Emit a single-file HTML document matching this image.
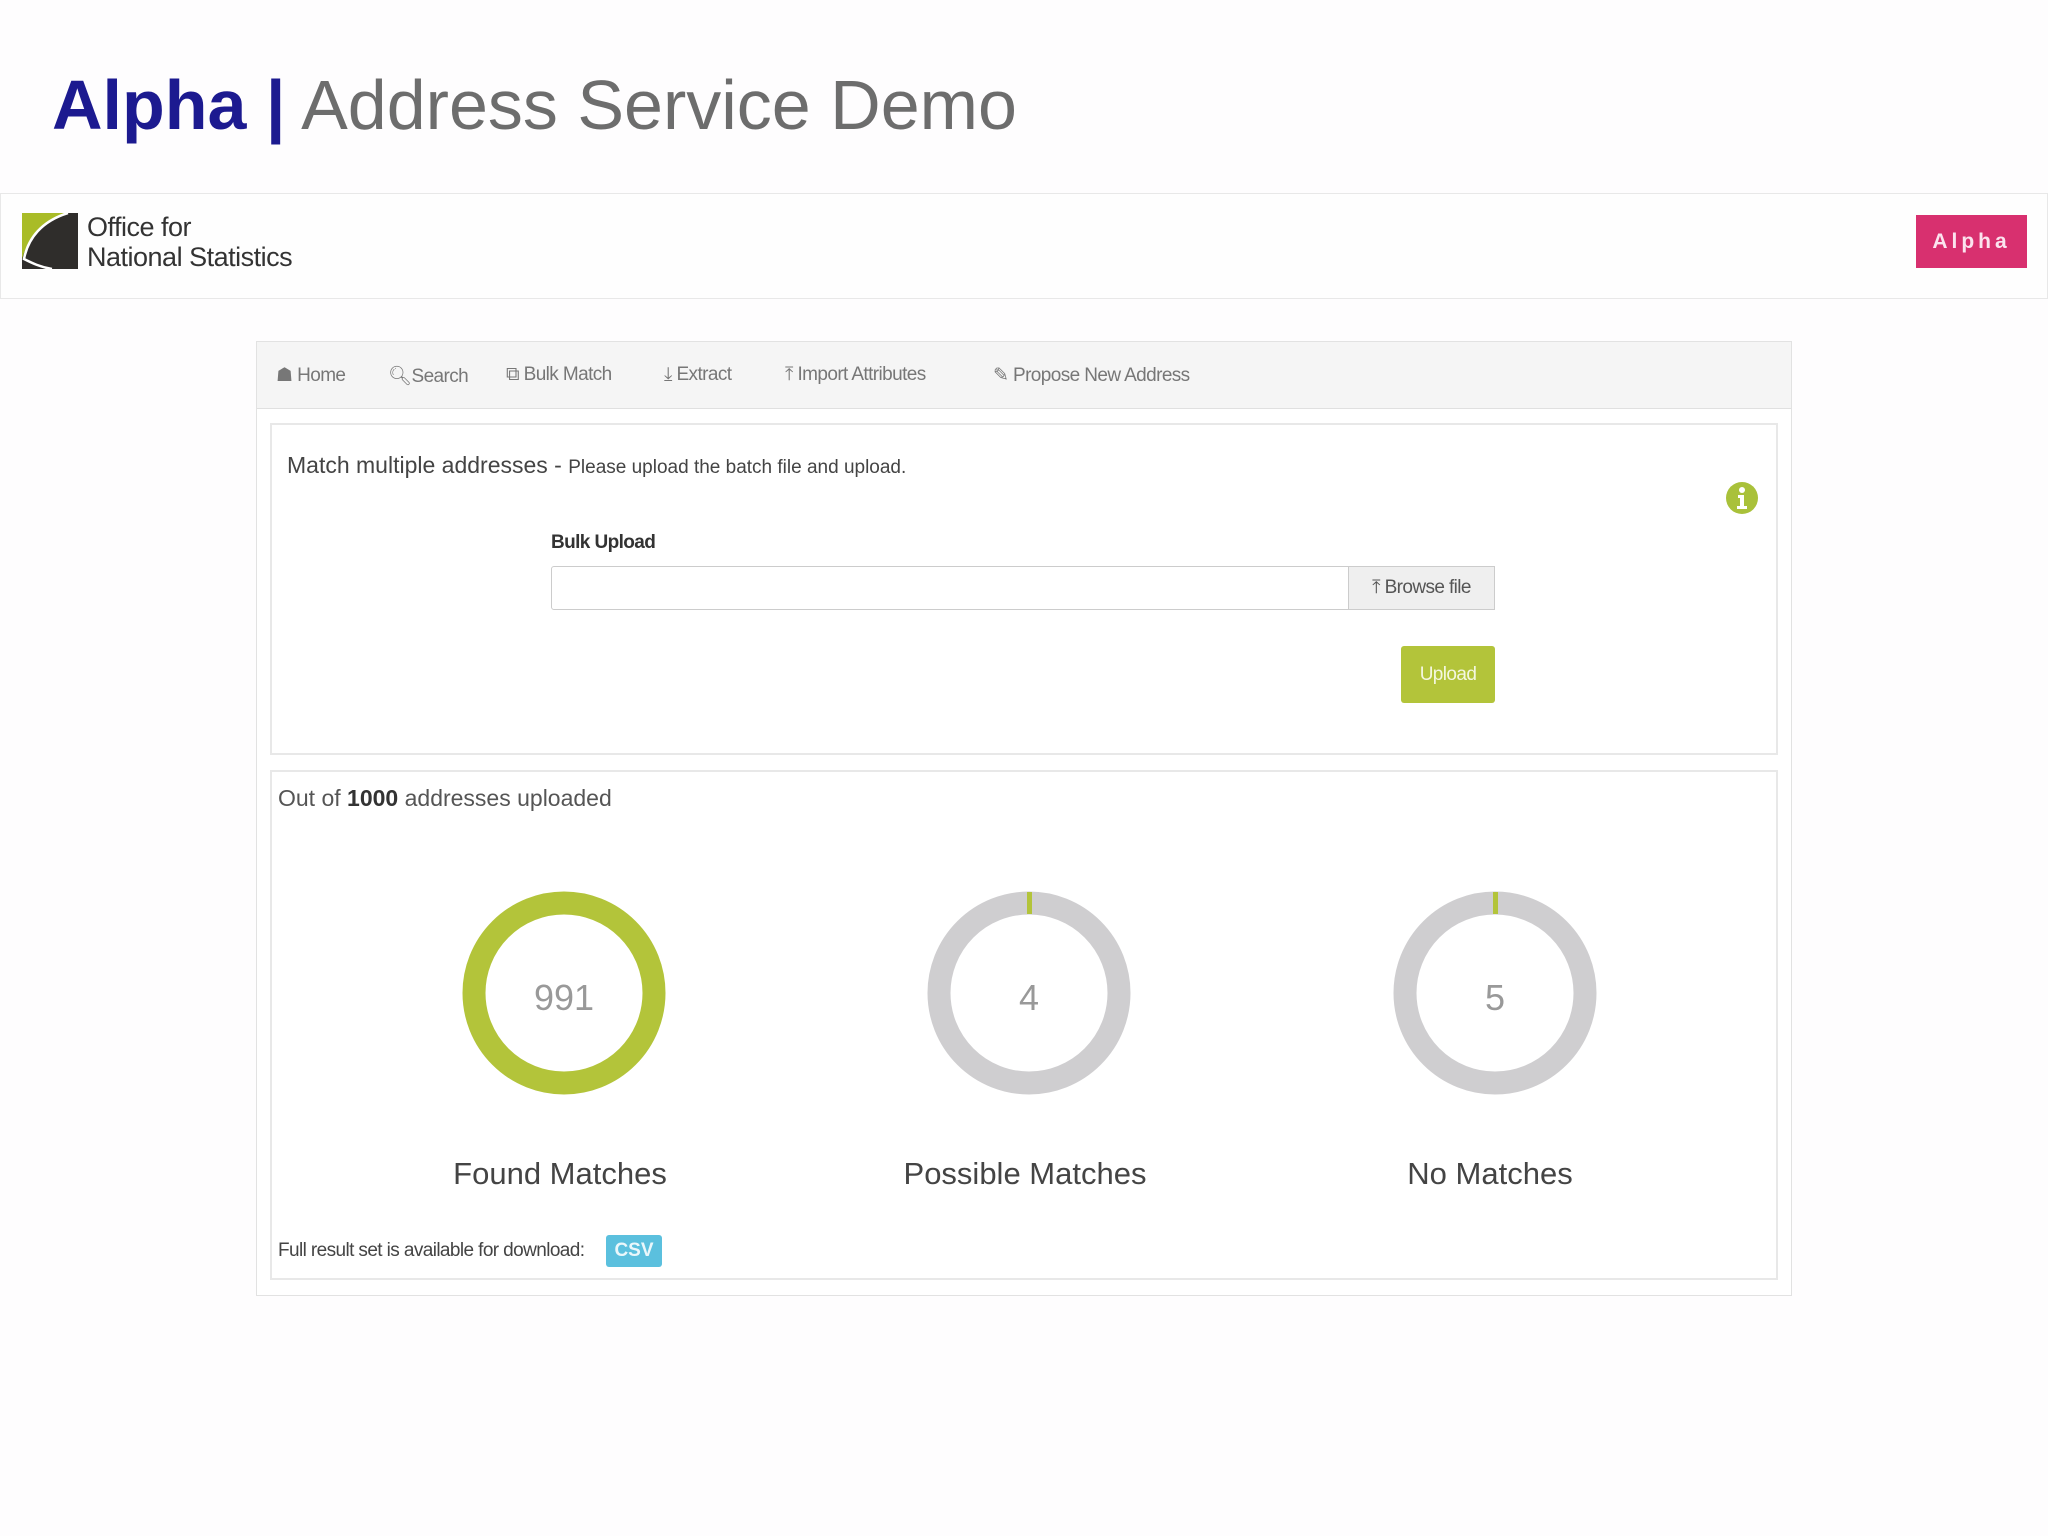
<!DOCTYPE html>
<html><head><meta charset="utf-8"><style>
*{margin:0;padding:0;box-sizing:border-box}
body{width:2048px;height:1536px;background:#fefdfe;font-family:"Liberation Sans",sans-serif;position:relative;overflow:hidden;color:#444}
.a{position:absolute;white-space:nowrap}
.nav span{position:absolute;top:0;font-size:19px;color:#777;letter-spacing:-0.6px}
</style></head><body>
<div class="a" style="left:52px;top:60px;font-size:70px;line-height:90px;"><b style="color:#1c1a90">Alpha |</b> <span style="color:#6d6d6d">Address Service Demo</span></div>

<div class="a" style="left:0;top:193px;width:2048px;height:106px;border:1px solid #e8e8e8;background:#fefefe"></div>
<svg class="a" style="left:22px;top:213px" width="56" height="56" viewBox="0 0 56 56">
<path d="M0 0H56V56H0Z" fill="#2f2d2b"/>
<path d="M0 0H46C20 8 6 25 0 46Z" fill="#a9bc27"/>
<path d="M46 0C20 8 6 25 2 46C10 50 18 54 30 56" fill="none" stroke="#fff" stroke-width="2.5"/>
</svg>
<div class="a" style="left:87px;top:212px;font-size:27px;line-height:30px;color:#333;letter-spacing:-0.5px">Office for<br>National Statistics</div>
<div class="a" style="left:1916px;top:215px;width:111px;height:53px;background:#d8306f;color:#fbe3ee;font-weight:bold;font-size:21px;letter-spacing:4px;line-height:53px;text-align:center">Alpha</div>

<div class="a" style="left:256px;top:341px;width:1536px;height:955px;border:1px solid #e2e2e2;background:#fff"></div>
<div class="a" style="left:257px;top:342px;width:1534px;height:67px;background:#f5f5f5;border-bottom:1px solid #e0e0e0"></div>
<div class="a nav" style="left:0;top:364px;width:2048px;height:30px">
<span style="left:276px">☗ Home</span>
<span style="left:388px">🔍︎Search</span>
<span style="left:506px">⧉ Bulk Match</span>
<span style="left:664px">⤓ Extract</span>
<span style="left:785px">⤒ Import Attributes</span>
<span style="left:993px">✎ Propose New Address</span>
</div>

<div class="a" style="left:270px;top:423px;width:1508px;height:332px;border:2px solid #e8e8e8;background:#fff"></div>
<div class="a" style="left:287px;top:452px;font-size:23px;color:#444;letter-spacing:0px">Match multiple addresses - <span style="font-size:19px;letter-spacing:0px">Please upload the batch file and upload.</span></div>
<svg class="a" style="left:1725px;top:481px" width="34" height="34" viewBox="0 0 34 34"><circle cx="17" cy="17" r="16" fill="#a9c13a"/><circle cx="17" cy="9" r="3" fill="#fff"/><path d="M13 14h6v11h3v3H12v-3h3v-8h-2z" fill="#fff"/></svg>
<div class="a" style="left:551px;top:532px;font-size:19px;font-weight:bold;color:#333;letter-spacing:-0.6px">Bulk Upload</div>
<div class="a" style="left:551px;top:566px;width:944px;height:44px;border:1px solid #ccc;border-radius:3px;background:#fff"></div>
<div class="a" style="left:1348px;top:566px;width:147px;height:44px;border:1px solid #ccc;background:#efefef;font-size:19px;color:#555;line-height:42px;text-align:center;letter-spacing:-0.6px">⤒ Browse file</div>
<div class="a" style="left:1401px;top:646px;width:94px;height:57px;background:#b3c43a;border-radius:3px;color:#f4f7e0;font-size:19px;line-height:57px;text-align:center;letter-spacing:-0.6px">Upload</div>

<div class="a" style="left:270px;top:770px;width:1508px;height:510px;border:2px solid #e8e8e8;background:#fff"></div>
<div class="a" style="left:278px;top:785px;font-size:23px;color:#555;letter-spacing:0px">Out of <b style="color:#333">1000</b> addresses uploaded</div>

<svg class="a" style="left:0;top:0" width="2048" height="1536">
<circle cx="564" cy="993" r="90" fill="none" stroke="#b3c43a" stroke-width="23"/>
<circle cx="1029" cy="993" r="90" fill="none" stroke="#cfced0" stroke-width="23"/>
<rect x="1027" y="892" width="5" height="22" fill="#b3c43a"/>
<circle cx="1495" cy="993" r="90" fill="none" stroke="#cfced0" stroke-width="23"/>
<rect x="1493" y="892" width="5" height="22" fill="#b3c43a"/>
<g font-family="Liberation Sans" font-size="36" fill="#999" text-anchor="middle">
<text x="564" y="1010">991</text><text x="1029" y="1010">4</text><text x="1495" y="1010">5</text></g>
<g font-family="Liberation Sans" font-size="31" fill="#444" text-anchor="middle">
<text x="560" y="1184">Found Matches</text><text x="1025" y="1184">Possible Matches</text><text x="1490" y="1184">No Matches</text></g>
</svg>
<div class="a" style="left:278px;top:1240px;font-size:19px;color:#444;letter-spacing:-0.6px">Full result set is available for download:</div>
<div class="a" style="left:606px;top:1235px;width:56px;height:32px;background:#5bc0de;border-radius:3px;color:#eaf7fb;font-weight:bold;font-size:19px;line-height:32px;text-align:center">CSV</div>
</body></html>
